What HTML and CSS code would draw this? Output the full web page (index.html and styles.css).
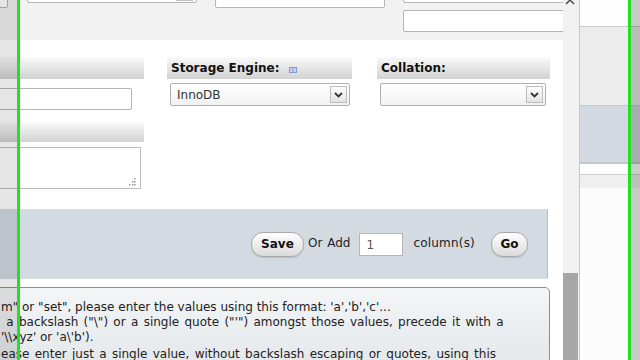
FILE: index.html
```html
<!doctype html>
<html lang="en">
<head>
<meta charset="utf-8">
<title>Create table</title>
<meta name="viewport" content="width=device-width, initial-scale=1">
<link rel="stylesheet" href="styles.css">
</head>
<body>

  <div class="screen">

    <div class="dialog">
      <div class="dialog-body">
        <div class="dialog-inner">

          <!-- column rows, scrolled up out of view -->
          <div class="top-fields">
            <div class="field stub"></div>
            <div class="field pick">
              <span class="pick-arrow"></span>
            </div>
            <div class="field wide"></div>
            <div class="field-stack">
              <div class="field long"></div>
              <div class="field long"></div>
            </div>
          </div>

          <!-- table options -->
          <div class="table-options">
            <div class="opt-col comment">
              <div class="opt-head"></div>
              <input class="text-in" type="text">
              <div class="opt-head low"></div>
              <div class="text-area">
                <svg class="grip" width="8" height="9" viewBox="0 0 8 9">
                  <rect x="6" y="1" width="1.5" height="1.5" fill="#999"/>
                  <rect x="4" y="4" width="1.5" height="1.5" fill="#999"/>
                  <rect x="6" y="4" width="1.5" height="1.5" fill="#999"/>
                  <rect x="1" y="7" width="1.5" height="1.5" fill="#999"/>
                  <rect x="4" y="7" width="1.5" height="1.5" fill="#999"/>
                  <rect x="6" y="7" width="1.5" height="1.5" fill="#999"/>
                </svg>
              </div>
            </div>

            <div class="opt-col engine">
              <div class="opt-head">Storage Engine:
                <svg class="help" width="8" height="6" viewBox="0 0 8 6">
                  <rect x="0.5" y="0.5" width="7" height="5" fill="#c9d4ee" stroke="#7f98cf"/>
                  <line x1="4" y1="1" x2="4" y2="5" stroke="#7f98cf"/>
                </svg>
              </div>
              <div class="select">
                <span class="select-value">InnoDB</span>
                <span class="select-arrow">
                  <svg width="9" height="6" viewBox="0 0 9 6"><polyline points="1,1 4.5,4.5 8,1" fill="none" stroke="#333" stroke-width="1.8"/></svg>
                </span>
              </div>
            </div>

            <div class="opt-col collation">
              <div class="opt-head">Collation:</div>
              <div class="select short">
                <span class="select-value"></span>
                <span class="select-arrow">
                  <svg width="9" height="6" viewBox="0 0 9 6"><polyline points="1,1 4.5,4.5 8,1" fill="none" stroke="#333" stroke-width="1.8"/></svg>
                </span>
              </div>
            </div>
          </div>

          <!-- footer with buttons -->
          <div class="footer-bar">
            <button class="btn save">Save</button>
            <span class="or-add">Or Add</span>
            <input class="num-in" type="text" value="1">
            <span class="cols">column(s)</span>
            <button class="btn go">Go</button>
          </div>

          <div class="note">
            <p>
              <span class="line first">m" or "set", please enter the values using this format: 'a','b','c'...</span>
              <span class="line wide">&nbsp;a backslash ("\") or a single quote ("'") amongst those values, precede it with a</span>
              <span class="line">'\\xyz' or 'a\'b').</span>
            </p>
            <p>
              <span class="line wide">ease enter just a single value, without backslash escaping or quotes, using this</span>
            </p>
          </div>

        </div>
      </div>

      <div class="scrollbar">
        <div class="scroll-thumb"></div>
      </div>
    </div>

    <!-- page behind the dialog -->
    <div class="backpage">
      <div class="bp-top"></div>
      <div class="bp-grey"></div>
      <div class="bp-blue"></div>
      <div class="bp-gap"></div>
      <div class="bp-band"></div>
      <div class="bp-rest"></div>
    </div>

  </div>

  <svg class="close-x" width="10" height="10" viewBox="0 0 10 10">
    <line x1="1" y1="1" x2="9" y2="9" stroke="#444" stroke-width="1.4"/>
    <line x1="9" y1="1" x2="1" y2="9" stroke="#444" stroke-width="1.4"/>
  </svg>

  <div class="shade shade-left"></div>
  <div class="shade shade-right"></div>
  <div class="guide guide-left"></div>
  <div class="guide guide-right"></div>

</body>
</html>
```

FILE: styles.css
```css
* { box-sizing: border-box; }

body {
  margin: 0;
  width: 640px;
  height: 360px;
  overflow: hidden;
  background-color: #fff;
  color: #222;
  font-family: "DejaVu Sans", Verdana, sans-serif;
  font-size: 12px;
}

.screen {
  display: flex;
  height: 360px;
}

/* dialog */

.dialog {
  display: flex;
  flex: none;
  width: 580px;
  height: 360px;
}

.dialog-body {
  width: 563px;
  overflow: hidden;
  background-color: #fff;
}

.dialog-inner {
  width: 583px;
  margin-left: -20px;
}

.scrollbar {
  display: flex;
  flex-direction: column;
  justify-content: flex-end;
  width: 17px;
  background-color: #f1f1f1;
  border-right: 1px solid #c8c8c8;
}

.scroll-thumb {
  height: 87px;
  margin-right: 1px;
  background-color: #a7a7a7;
}

/* top rows */

.top-fields {
  display: flex;
  align-items: flex-start;
  height: 40px;
  background-color: #f2f2f2;
}

.field {
  flex: none;
  height: 23px;
  background-color: #fff;
  border: 1px solid #b5b5b5;
  border-radius: 2px;
}

.field.stub { width: 28px; margin: -15px 19px 0 0; }
.field.wide { width: 170px; margin: -15px 18px 0 0; }

.field.pick {
  display: flex;
  justify-content: flex-end;
  align-items: flex-end;
  width: 170px;
  margin: -20px 18px 0 0;
  padding: 0 3px 1px 0;
}

.pick-arrow {
  width: 17px;
  height: 17px;
  border: 1px solid #c0c0c0;
  background: linear-gradient(#fdfdfd, #e4e4e4);
}

.field-stack {
  display: flex;
  flex-direction: column;
  gap: 7px;
  margin-top: -20px;
}

.field.long { width: 175px; }
.field.long + .field.long { height: 22px; }

/* table options */

.table-options {
  display: flex;
  padding: 17px 0 20px;
}

.opt-col {
  display: flex;
  flex-direction: column;
  flex: none;
}

.opt-col.comment { width: 164px; }
.opt-col.engine { width: 185px; margin-left: 23px; }
.opt-col.collation { width: 173px; margin-left: 25px; }

.opt-head {
  height: 22px;
  padding: 4px 4px 0;
  font-weight: bold;
  color: #111;
  white-space: nowrap;
  background: linear-gradient(#f9f9f9, #d2d2d2);
}

.opt-head.low {
  height: 20px;
  margin-top: 12px;
}

.help {
  margin-left: 5px;
  vertical-align: -1px;
}

.text-in {
  width: 152px;
  height: 22px;
  margin: 9px 0 0;
  border: 1px solid #b5b5b5;
  border-radius: 2px;
  background-color: #fff;
}

.text-area {
  display: flex;
  justify-content: flex-end;
  align-items: flex-end;
  width: 161px;
  height: 42px;
  margin-top: 5px;
  padding: 0 4px 2px 0;
  border: 1px solid #bdbdbd;
  background-color: #fff;
}

.select {
  display: flex;
  justify-content: space-between;
  align-items: center;
  width: 180px;
  height: 23px;
  margin: 4px 0 0 3px;
  padding: 0 2px 0 6px;
  border: 1px solid #b0b0b0;
  border-radius: 2px;
  background: linear-gradient(#fff, #f1f1f1);
}

.select.short { width: 166px; }

.select-value {
  color: #333;
}

.select-arrow {
  display: flex;
  justify-content: center;
  align-items: center;
  width: 17px;
  height: 17px;
  border: 1px solid #bcbcbc;
  background: linear-gradient(#fdfdfd, #e2e2e2);
}

/* footer */

.footer-bar {
  display: flex;
  justify-content: flex-end;
  align-items: center;
  width: 568px;
  height: 70px;
  padding-right: 19px;
  background-color: #d3dae2;
  border-right: 1px solid #b3bcc6;
  border-radius: 0 0 3px 0;
  color: #222;
}

.btn {
  height: 25px;
  padding: 0;
  border: 1px solid #a9a9a9;
  border-radius: 12px;
  background: linear-gradient(#ffffff, #dadada);
  font-family: "DejaVu Sans", Verdana, sans-serif;
  font-size: 12px;
  font-weight: bold;
  color: #111;
  box-shadow: 0 1px 1px rgba(0, 0, 0, .12);
}

.btn.save { width: 53px; margin-right: 4px; }
.btn.go { width: 37px; }

.or-add { margin: -3px 9px 0 0; word-spacing: 1px; }
.cols { margin: -3px 16px 0 0; letter-spacing: .2px; }

.num-in {
  width: 44px;
  height: 23px;
  margin-right: 10px;
  padding: 2px 0 0 6px;
  border: 1px solid #b5b5b5;
  background-color: #fff;
  font-family: "DejaVu Sans", Verdana, sans-serif;
  font-size: 12px;
  color: #555;
}

/* help text */

.note {
  width: 570px;
  height: 80px;
  margin-top: 8px;
  padding: 12px 0 0 20px;
  border: 1px solid #8e8e8e;
  border-radius: 0 5px 0 0;
  background: linear-gradient(#f3f5f7, #e4e8eb);
  line-height: 15px;
  color: #222;
}

.note p {
  margin: 0;
  white-space: nowrap;
}

.note p + p { margin-top: 2px; }

.note .line { display: block; }
.note .line.wide { word-spacing: 1.5px; }

/* page behind */

.backpage {
  display: flex;
  flex-direction: column;
  flex: 1;
}

.bp-top { height: 27px; background-color: #fdfdfd; border-bottom: 1px solid #c8c8c8; }
.bp-grey { height: 79px; background-color: #ececec; border-bottom: 1px solid #c8c8c8; }
.bp-blue { height: 58px; background-color: #d3d9e1; border-bottom: 2px solid #c6c6c6; }
.bp-gap { height: 11px; background-color: #fff; border-bottom: 1px solid #cfcfcf; }
.bp-band { height: 13px; background-color: #efefef; }
.bp-rest { flex: 1; background-color: #fcfcfc; }

/* overlays */

.close-x {
  position: absolute;
  left: 565px;
  top: -5px;
}

.shade {
  position: absolute;
  top: 0;
  height: 360px;
}

.shade-left { left: 0; width: 17px; background-color: rgba(0, 0, 0, .1); }
.shade-right { left: 631px; width: 9px; background-color: rgba(0, 0, 0, .2); }

.guide {
  position: absolute;
  top: 0;
  width: 3px;
  height: 360px;
  background-color: #1ee31e;
}

.guide-left { left: 17px; }
.guide-right { left: 628px; }
```
